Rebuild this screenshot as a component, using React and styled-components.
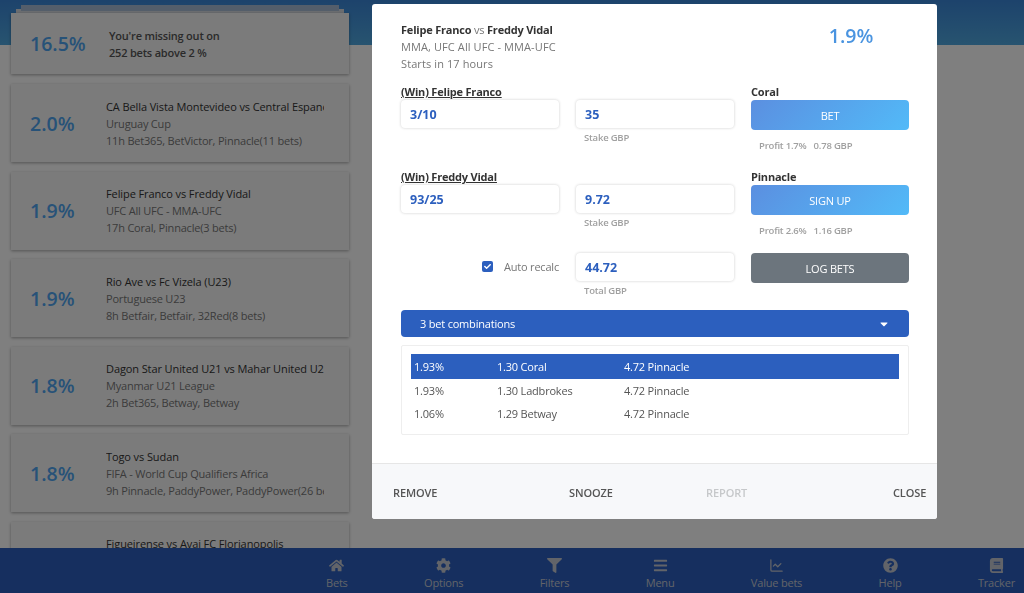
import React from 'react';
import styled, { createGlobalStyle } from 'styled-components';
import { FaHome, FaCog, FaFilter, FaBars, FaQuestionCircle, FaBook, FaCheck, FaCaretDown } from 'react-icons/fa';
import { ChartLine } from 'lucide-react';

const GlobalStyle = createGlobalStyle`
  html, body {
    margin: 0;
    height: 100%;
    overflow: hidden;
  }
  body {
    font-family: "Open Sans", "Noto Sans", sans-serif;
    font-size: 11px;
    letter-spacing: -0.2px;
  }
  * {
    box-sizing: border-box;
  }
`;

const Page = styled.div`
  width: 1024px;
  height: 593px;
  display: flex;
  flex-direction: column;
  background: linear-gradient(180deg, #3a86d8 0, #4fa8e0 45px) no-repeat;
  background-size: 100% 45px;
  background-color: #fff;
`;

const List = styled.div`
  flex: 1;
  min-height: 0;
  overflow: hidden;
  isolation: isolate;
  width: 360px;
  padding: 13px 0 0 11px;
  display: flex;
  flex-direction: column;
`;

const Card = styled.div`
  position: relative;
  flex: none;
  width: 338px;
  height: ${p => (p.$promo ? '61px' : '78px')};
  margin-bottom: ${p => (p.$promo ? '10px' : '9.6px')};
  display: flex;
  align-items: center;
  padding-left: 19px;
  background: #f6f6f6;
  box-shadow: 0 1px 3px rgba(0, 0, 0, 0.35);

  ${p => p.$promo && `
    &::before, &::after {
      content: '';
      position: absolute;
      z-index: -1;
    }
    &::before {
      left: 5px;
      right: 5px;
      top: -4px;
      height: 6px;
      background: #d8dce2;
    }
    &::after {
      left: 10px;
      right: 10px;
      top: -8px;
      height: 6px;
      background: #a9bdd6;
    }
  `}
`;

const Percent = styled.div`
  width: 76px;
  flex: none;
  font-size: 19.5px;
  font-weight: 600;
  letter-spacing: 0;
  color: #4ea4f0;
`;

const CardText = styled.div`
  width: 218px;
  overflow: hidden;
  white-space: nowrap;
  line-height: 17px;
  color: #777;
  padding-left: ${p => (p.$promo ? '3px' : '0')};
`;

const CardTitle = styled.div`
  color: #333;
  letter-spacing: -0.1px;
`;

const PromoLine = styled.div`
  color: #555;
  font-weight: 600;
`;

const Nav = styled.nav`
  flex: none;
  height: 45px;
  display: flex;
  justify-content: space-between;
  padding: 10px 9px 0 326px;
  background: #2c5fbe;
`;

const NavItem = styled.div`
  display: flex;
  flex-direction: column;
  align-items: center;
  gap: 3px;
  color: #c4c8d2;
  font-size: 11px;
  line-height: 14px;
`;

const Overlay = styled.div`
  position: fixed;
  inset: 0;
  background: rgba(0, 0, 0, 0.5);
`;

const Modal = styled.div`
  position: fixed;
  left: 372px;
  top: 4px;
  width: 565px;
  height: 515px;
  background: #fff;
  border-radius: 3px;
  display: flex;
  flex-direction: column;
  overflow: hidden;
`;

const Body = styled.div`
  flex: 1;
  padding: 17px 28px 0 29px;
`;

const Head = styled.div`
  display: grid;
  grid-template-columns: 1fr 116px;
  height: 64px;
`;

const Match = styled.div`
  line-height: 17px;
  letter-spacing: 0.1px;
  color: #777;
`;

const MatchTitle = styled.div`
  color: #777;
  letter-spacing: -0.2px;
  b {
    font-weight: 700;
    color: #333;
  }
`;

const Score = styled.div`
  text-align: center;
  padding-top: 1px;
  font-size: 19.5px;
  font-weight: 600;
  letter-spacing: 0;
  color: #4a94e0;
`;

const BetGrid = styled.div`
  display: grid;
  grid-template-columns: 158px 158px 158px;
  column-gap: 17px;
  row-gap: 1px;
  align-items: start;
  align-content: start;
  height: ${p => p.$height};
`;

const Label = styled.div`
  grid-column: ${p => p.$col};
  height: 14px;
  line-height: 14px;
  font-weight: 700;
  color: #333;
  text-decoration: ${p => (p.$line ? 'underline' : 'none')};
`;

const Field = styled.div`
  height: 28px;
  padding: 0 9px;
  display: flex;
  align-items: center;
  font-size: 12.5px;
  font-weight: 700;
  letter-spacing: 0;
  color: #2c5fbe;
  background: #fff;
  border-radius: 4px;
  box-shadow: 0 0 3px rgba(0, 0, 0, 0.2);
`;

const Caption = styled.div`
  margin: 3px 0 0 8px;
  font-size: 9.5px;
  line-height: 13px;
  font-weight: 600;
  color: #a0a0a0;
`;

const Button = styled.div`
  height: 30px;
  display: flex;
  align-items: center;
  justify-content: center;
  font-size: 11px;
  color: #fff;
  border-radius: 4px;
  background: ${p => (p.$dark ? '#6c757d' : 'linear-gradient(135deg, #5b8fe0, #52baf8)')};
`;

const Profit = styled.div`
  margin: 9px 0 0 8px;
  font-size: 9.5px;
  line-height: 13px;
  font-weight: 600;
  color: #a0a0a0;
  span {
    margin-left: 7px;
  }
`;

const Recalc = styled.div`
  height: 28px;
  display: flex;
  align-items: center;
  justify-content: flex-end;
  gap: 11px;
  color: #777;
  padding-bottom: 1px;
  grid-column: 1;
`;

const CheckBox = styled.span`
  width: 11px;
  height: 11px;
  border-radius: 2px;
  background: #2c5fbe;
  color: #fff;
  font-size: 7px;
  display: flex;
  align-items: center;
  justify-content: center;
`;

const ComboBar = styled.div`
  height: 27px;
  padding: 0 19px;
  display: flex;
  align-items: center;
  justify-content: space-between;
  border-radius: 4px;
  background: #2c5fbe;
  color: #fff;
  font-size: 11px;
`;

const ComboBox = styled.div`
  height: 90px;
  margin-top: 8px;
  padding: 8px 9px;
  border: 1px solid #eee;
  border-radius: 2px;
`;

const ComboRow = styled.div`
  display: grid;
  grid-template-columns: 83px 127px 1fr;
  height: ${p => (p.$active ? '25px' : '23px')};
  align-items: center;
  padding-left: 3px;
  color: ${p => (p.$active ? '#fff' : '#555')};
  background: ${p => (p.$active ? '#2c5fbe' : 'transparent')};
`;

const Footer = styled.div`
  flex: none;
  height: 56px;
  display: grid;
  grid-template-columns: 176px 137px 187px auto;
  align-items: center;
  padding: 2px 0 0 21px;
  background: #f7f8fa;
  border-top: 1px solid #e6e6e6;
`;

const FooterButton = styled.div`
  font-size: 11px;
  font-weight: 600;
  letter-spacing: -0.1px;
  color: ${p => (p.$off ? '#c6c8ca' : '#555')};
`;

const bets = [
  { pct: '2.0%', title: 'CA Bella Vista Montevideo vs Central Espanol', league: 'Uruguay Cup', info: '11h Bet365, BetVictor, Pinnacle(11 bets)' },
  { pct: '1.9%', title: 'Felipe Franco vs Freddy Vidal', league: 'UFC All UFC - MMA-UFC', info: '17h Coral, Pinnacle(3 bets)' },
  { pct: '1.9%', title: 'Rio Ave vs Fc Vizela (U23)', league: 'Portuguese U23', info: '8h Betfair, Betfair, 32Red(8 bets)' },
  { pct: '1.8%', title: 'Dagon Star United U21 vs Mahar United U21', league: 'Myanmar U21 League', info: '2h Bet365, Betway, Betway' },
  { pct: '1.8%', title: 'Togo vs Sudan', league: 'FIFA - World Cup Qualifiers Africa', info: '9h Pinnacle, PaddyPower, PaddyPower(26 bets)' },
  { pct: '1.7%', title: 'Figueirense vs Avai FC Florianopolis', league: 'Brazil Cup', info: '5h Betway, Pinnacle(4 bets)' },
];

const combos = [
  { pct: '1.93%', first: '1.30 Coral', second: '4.72 Pinnacle', active: true },
  { pct: '1.93%', first: '1.30 Ladbrokes', second: '4.72 Pinnacle' },
  { pct: '1.06%', first: '1.29 Betway', second: '4.72 Pinnacle' },
];

const navItems = [
  { label: 'Bets', Icon: FaHome },
  { label: 'Options', Icon: FaCog },
  { label: 'Filters', Icon: FaFilter },
  { label: 'Menu', Icon: FaBars },
  { label: 'Value bets', Icon: ChartLine },
  { label: 'Help', Icon: FaQuestionCircle },
  { label: 'Tracker', Icon: FaBook },
];

const App = () => (
  <>
    <GlobalStyle />
    <Page>
      <List>
        <Card $promo>
          <Percent>16.5%</Percent>
          <CardText $promo>
            <PromoLine>You're missing out on</PromoLine>
            <PromoLine>252 bets above 2 %</PromoLine>
          </CardText>
        </Card>
        {bets.map(bet => (
          <Card key={bet.title}>
            <Percent>{bet.pct}</Percent>
            <CardText>
              <CardTitle>{bet.title}</CardTitle>
              <div>{bet.league}</div>
              <div>{bet.info}</div>
            </CardText>
          </Card>
        ))}
      </List>
      <Nav>
        {navItems.map(({ label, Icon }) => (
          <NavItem key={label}>
            <Icon size={15} />
            {label}
          </NavItem>
        ))}
      </Nav>
    </Page>
    <Overlay />
    <Modal>
      <Body>
        <Head>
          <Match>
            <MatchTitle><b>Felipe Franco</b> vs <b>Freddy Vidal</b></MatchTitle>
            <div>MMA, UFC All UFC - MMA-UFC</div>
            <div>Starts in 17 hours</div>
          </Match>
          <Score>1.9%</Score>
        </Head>
        <BetGrid $height="85px">
          <Label $col={1} $line>(Win) Felipe Franco</Label>
          <Label $col={3}>Coral</Label>
          <Field>3/10</Field>
          <div>
            <Field>35</Field>
            <Caption>Stake GBP</Caption>
          </div>
          <div>
            <Button>BET</Button>
            <Profit>Profit 1.7%<span>0.78 GBP</span></Profit>
          </div>
        </BetGrid>
        <BetGrid $height="83px">
          <Label $col={1} $line>(Win) Freddy Vidal</Label>
          <Label $col={3}>Pinnacle</Label>
          <Field>93/25</Field>
          <div>
            <Field>9.72</Field>
            <Caption>Stake GBP</Caption>
          </div>
          <div>
            <Button>SIGN UP</Button>
            <Profit>Profit 2.6%<span>1.16 GBP</span></Profit>
          </div>
        </BetGrid>
        <BetGrid $height="57px">
          <Recalc>
            <CheckBox><FaCheck /></CheckBox>
            Auto recalc
          </Recalc>
          <div>
            <Field>44.72</Field>
            <Caption>Total GBP</Caption>
          </div>
          <Button $dark>LOG BETS</Button>
        </BetGrid>
        <ComboBar>
          3 bet combinations
          <FaCaretDown size={12} />
        </ComboBar>
        <ComboBox>
          {combos.map(combo => (
            <ComboRow key={combo.first} $active={combo.active}>
              <span>{combo.pct}</span>
              <span>{combo.first}</span>
              <span>{combo.second}</span>
            </ComboRow>
          ))}
        </ComboBox>
      </Body>
      <Footer>
        <FooterButton>REMOVE</FooterButton>
        <FooterButton>SNOOZE</FooterButton>
        <FooterButton $off>REPORT</FooterButton>
        <FooterButton>CLOSE</FooterButton>
      </Footer>
    </Modal>
  </>
);

export default App;
